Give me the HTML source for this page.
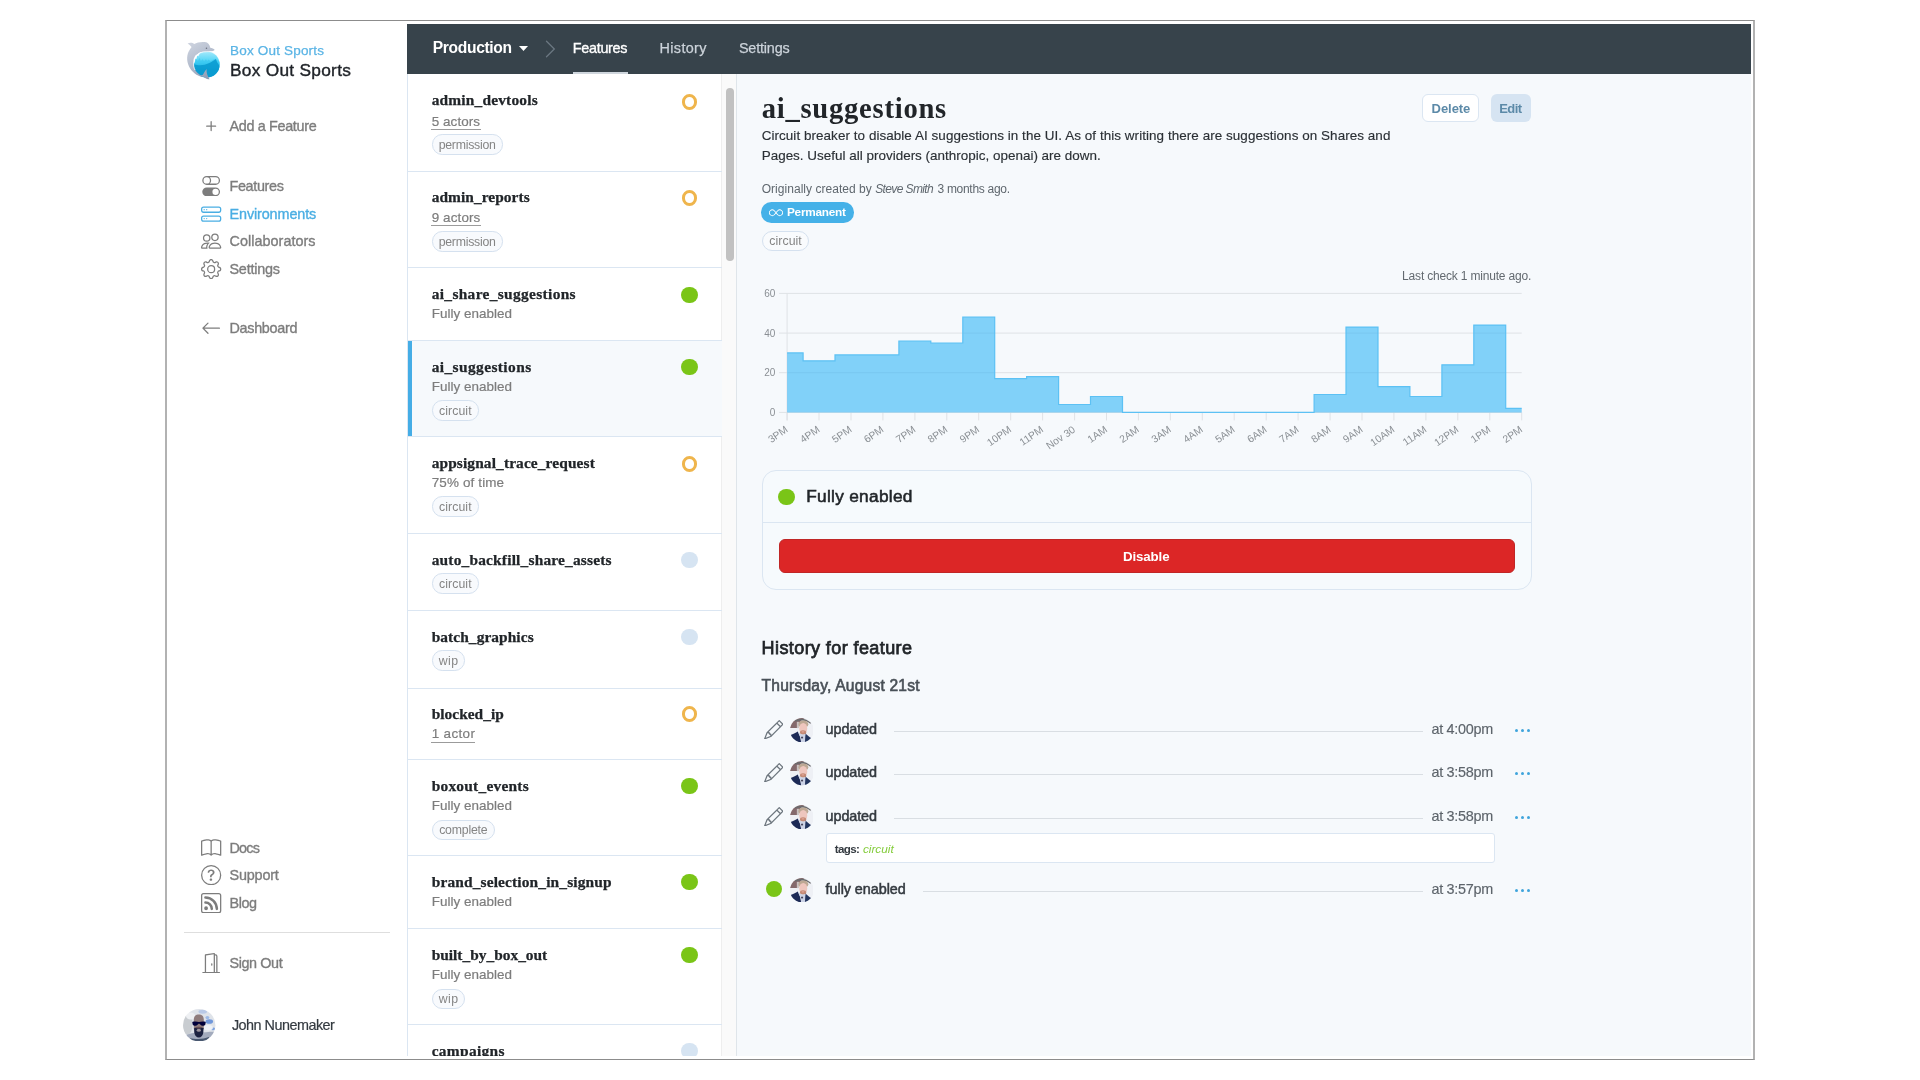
<!DOCTYPE html>
<html>
<head>
<meta charset="utf-8">
<title>Flipper Cloud - ai_suggestions</title>
<style>
*{box-sizing:border-box;margin:0;padding:0}
html,body{width:1920px;height:1080px;background:#fff;overflow:hidden}
body{font-family:"Liberation Sans",sans-serif;color:#212529;position:relative;font-size:14px}
.abs{position:absolute}
.t{position:absolute;white-space:pre;display:block}
#frame{position:absolute;left:165px;top:20px;width:1590px;height:1040px;border:1px solid #8c8c8c;border-left:2px solid #b2b2b2;border-right:2px solid #b2b2b2;z-index:50}
#clip{position:absolute;left:167px;top:21px;width:1583.500px;height:1035px;overflow:hidden;background:#fff}
#page{position:absolute;left:-167px;top:-21px;width:1920px;height:1080px;will-change:transform}
</style>
</head>
<body>
<div id="clip"><div id="page">
<!-- SIDEBAR -->
<svg class="abs" style="left:180px;top:36px" width="48" height="50" viewBox="0 0 1037 1080">
<defs>
<linearGradient id="lg1" x1="0" y1="0" x2="0" y2="1"><stop offset="0" stop-color="#a5e9fb"/><stop offset="0.42" stop-color="#48d3f6"/><stop offset="0.62" stop-color="#14a9dc"/><stop offset="1" stop-color="#0a94c9"/></linearGradient>
<linearGradient id="lg2" x1="0.2" y1="0" x2="0.7" y2="1"><stop offset="0" stop-color="#ccd2de"/><stop offset="0.5" stop-color="#b3bccd"/><stop offset="1" stop-color="#909cb4"/></linearGradient>
<clipPath id="lgc"><circle cx="575" cy="615" r="282"/></clipPath>
</defs>
<circle cx="575" cy="615" r="292" fill="#e9f9fe"/>
<circle cx="575" cy="615" r="282" fill="url(#lg1)"/>
<g clip-path="url(#lgc)">
<path d="M300 470 L335 560 L350 480 L385 545 L420 470 L450 540 L490 500 L520 545 L560 500 L590 540 L620 505 L660 545 L700 520 L760 490 L860 560 L860 700 L290 700Z" fill="#33c2ee" opacity=".55"/>
<path d="M285 600 C400 650 520 640 620 590 C690 555 740 520 775 495 L800 560 L850 640 L870 900 L280 900Z" fill="#0a9bd0" opacity=".9"/>
</g>
<path d="M165 160 C210 140 270 140 310 175 C360 140 450 120 540 130 C600 135 640 180 655 255 C690 265 730 275 748 295 C745 320 700 330 640 328 C600 335 560 330 530 335 C460 335 400 360 375 400 C330 450 300 520 295 590 C290 680 330 770 420 830 C450 850 470 850 490 845 C520 800 545 750 575 715 C570 790 585 860 640 935 C600 935 540 915 505 880 C420 885 300 820 220 700 C150 590 130 450 190 330 C210 290 230 260 250 235 C225 205 195 180 165 160 Z" fill="url(#lg2)"/>
<path d="M372 392 L432 372 L395 440 L372 425 L352 505 L332 480 L318 570 L300 585 L292 500 L330 420Z" fill="#fff" opacity=".92"/><path d="M375 400 C330 450 300 520 295 590 C290 640 300 690 325 735" fill="none" stroke="#fff" stroke-width="18" opacity=".9"/>
<path d="M380 395 C450 345 560 335 650 338 C700 338 735 330 748 310" fill="none" stroke="#fff" stroke-width="16" opacity=".8"/>
<circle cx="572" cy="266" r="17" fill="#6b7280"/>
</svg>
<span class="t" style="left:230.00px;top:40.57px;font-family:'Liberation Sans',sans-serif;font-size:13.5px;line-height:20px;color:#5ab4e5;letter-spacing:0.189px;-webkit-text-stroke:0.25px #5ab4e5;">Box Out Sports</span>
<span class="t" style="left:230.00px;top:58.26px;font-family:'Liberation Sans',sans-serif;font-size:17.3px;line-height:24px;color:#1f2328;letter-spacing:0.284px;-webkit-text-stroke:0.4px #1f2328;">Box Out Sports</span>
<svg class="abs" style="left:201.2px;top:115.6px;" width="20.3" height="20.3" viewBox="0 0 16 16" fill="#7d7d7d"><path d="M8 4a.5.5 0 0 1 .5.5v3h3a.5.5 0 0 1 0 1h-3v3a.5.5 0 0 1-1 0v-3h-3a.5.5 0 0 1 0-1h3v-3A.5.5 0 0 1 8 4z"/></svg>
<span class="t" style="left:229.50px;top:116.26px;font-family:'Liberation Sans',sans-serif;font-size:14.4px;line-height:20px;color:#7d7d7d;letter-spacing:-0.338px;-webkit-text-stroke:0.35px #7d7d7d;">Add a Feature</span>
<svg class="abs" style="left:201.4px;top:175.9px;" width="20.3" height="20.3" viewBox="0 0 16 16" fill="#7d7d7d"><path d="M4.5 9a3.5 3.5 0 1 0 0 7h7a3.5 3.5 0 1 0 0-7h-7zm7 6a2.5 2.5 0 1 1 0-5 2.5 2.5 0 0 1 0 5zm-7-14a2.5 2.5 0 1 0 0 5 2.5 2.5 0 0 0 0-5zm2.45 0A3.49 3.49 0 0 1 8 3.5 3.49 3.49 0 0 1 6.95 6h4.55a2.5 2.5 0 0 0 0-5H6.95zM4.5 0h7a3.5 3.5 0 1 1 0 7h-7a3.5 3.5 0 1 1 0-7z"/></svg>
<span class="t" style="left:229.50px;top:176.26px;font-family:'Liberation Sans',sans-serif;font-size:14.4px;line-height:20px;color:#7d7d7d;letter-spacing:-0.347px;-webkit-text-stroke:0.35px #7d7d7d;">Features</span>
<svg class="abs" style="left:201.4px;top:203.6px;" width="20.3" height="20.3" viewBox="0 0 16 16" fill="#4aaee3"><path d="M14 10a1 1 0 0 1 1 1v1a1 1 0 0 1-1 1H2a1 1 0 0 1-1-1v-1a1 1 0 0 1 1-1h12zM2 9a2 2 0 0 0-2 2v1a2 2 0 0 0 2 2h12a2 2 0 0 0 2-2v-1a2 2 0 0 0-2-2H2z"/><path d="M5 11.5a.5.5 0 1 1-1 0 .5.5 0 0 1 1 0zm-2 0a.5.5 0 1 1-1 0 .5.5 0 0 1 1 0zM14 3a1 1 0 0 1 1 1v1a1 1 0 0 1-1 1H2a1 1 0 0 1-1-1V4a1 1 0 0 1 1-1h12zM2 2a2 2 0 0 0-2 2v1a2 2 0 0 0 2 2h12a2 2 0 0 0 2-2V4a2 2 0 0 0-2-2H2z"/><path d="M5 4.5a.5.5 0 1 1-1 0 .5.5 0 0 1 1 0zm-2 0a.5.5 0 1 1-1 0 .5.5 0 0 1 1 0z"/></svg>
<span class="t" style="left:229.50px;top:204.26px;font-family:'Liberation Sans',sans-serif;font-size:14.4px;line-height:20px;color:#4aaee3;letter-spacing:-0.113px;-webkit-text-stroke:0.35px #4aaee3;">Environments</span>
<svg class="abs" style="left:201.4px;top:230.9px;" width="20.3" height="20.3" viewBox="0 0 16 16" fill="#7d7d7d"><path d="M15 14s1 0 1-1-1-4-5-4-5 3-5 4 1 1 1 1h8zm-7.978-1A.261.261 0 0 1 7 12.996c.001-.264.167-1.03.76-1.72C8.312 10.629 9.282 10 11 10c1.717 0 2.687.63 3.24 1.276.593.69.758 1.457.76 1.72l-.008.002a.274.274 0 0 1-.014.002H7.022zM11 7a2 2 0 1 0 0-4 2 2 0 0 0 0 4zm3-2a3 3 0 1 1-6 0 3 3 0 0 1 6 0zM6.936 9.28a5.88 5.88 0 0 0-1.23-.247A7.35 7.35 0 0 0 5 9c-4 0-5 3-5 4 0 .667.333 1 1 1h4.216A2.238 2.238 0 0 1 5 13c0-1.01.377-2.042 1.09-2.904.243-.294.526-.569.846-.816zM4.92 10A5.493 5.493 0 0 0 4 13H1c0-.26.164-1.03.76-1.724.545-.636 1.492-1.256 3.16-1.275zM1.5 5.5a3 3 0 1 1 6 0 3 3 0 0 1-6 0zm3-2a2 2 0 1 0 0 4 2 2 0 0 0 0-4z"/></svg>
<span class="t" style="left:229.50px;top:231.26px;font-family:'Liberation Sans',sans-serif;font-size:14.4px;line-height:20px;color:#7d7d7d;letter-spacing:0.038px;-webkit-text-stroke:0.35px #7d7d7d;">Collaborators</span>
<svg class="abs" style="left:201.4px;top:258.9px;" width="20.3" height="20.3" viewBox="0 0 16 16" fill="#7d7d7d"><path d="M8 4.754a3.246 3.246 0 1 0 0 6.492 3.246 3.246 0 0 0 0-6.492zM5.754 8a2.246 2.246 0 1 1 4.492 0 2.246 2.246 0 0 1-4.492 0z"/><path d="M9.796 1.343c-.527-1.79-3.065-1.79-3.592 0l-.094.319a.873.873 0 0 1-1.255.52l-.292-.16c-1.64-.892-3.433.902-2.54 2.541l.159.292a.873.873 0 0 1-.52 1.255l-.319.094c-1.79.527-1.79 3.065 0 3.592l.319.094a.873.873 0 0 1 .52 1.255l-.16.292c-.892 1.64.901 3.434 2.541 2.54l.292-.159a.873.873 0 0 1 1.255.52l.094.319c.527 1.79 3.065 1.79 3.592 0l.094-.319a.873.873 0 0 1 1.255-.52l.292.16c1.64.893 3.434-.902 2.54-2.541l-.159-.292a.873.873 0 0 1 .52-1.255l.319-.094c1.79-.527 1.79-3.065 0-3.592l-.319-.094a.873.873 0 0 1-.52-1.255l.16-.292c.893-1.64-.902-3.433-2.541-2.54l-.292.159a.873.873 0 0 1-1.255-.52l-.094-.319zm-2.633.283c.246-.835 1.428-.835 1.674 0l.094.319a1.873 1.873 0 0 0 2.693 1.115l.291-.16c.764-.415 1.6.42 1.184 1.185l-.159.292a1.873 1.873 0 0 0 1.116 2.692l.318.094c.835.246.835 1.428 0 1.674l-.319.094a1.873 1.873 0 0 0-1.115 2.693l.16.291c.415.764-.42 1.6-1.185 1.184l-.291-.159a1.873 1.873 0 0 0-2.693 1.116l-.094.318c-.246.835-1.428.835-1.674 0l-.094-.319a1.873 1.873 0 0 0-2.692-1.115l-.292.16c-.764.415-1.6-.42-1.184-1.185l.159-.291A1.873 1.873 0 0 0 1.945 8.93l-.319-.094c-.835-.246-.835-1.428 0-1.674l.319-.094A1.873 1.873 0 0 0 3.06 4.377l-.16-.292c-.415-.764.42-1.6 1.185-1.184l.292.159a1.873 1.873 0 0 0 2.692-1.115l.094-.319z"/></svg>
<span class="t" style="left:229.50px;top:259.26px;font-family:'Liberation Sans',sans-serif;font-size:14.4px;line-height:20px;color:#7d7d7d;letter-spacing:-0.233px;-webkit-text-stroke:0.35px #7d7d7d;">Settings</span>
<svg class="abs" style="left:201.4px;top:317.59999999999997px;" width="20.3" height="20.3" viewBox="0 0 16 16" fill="#7d7d7d"><path fill-rule="evenodd" d="M15 8a.5.5 0 0 0-.5-.5H2.707l3.147-3.146a.5.5 0 1 0-.708-.708l-4 4a.5.5 0 0 0 0 .708l4 4a.5.5 0 0 0 .708-.708L2.707 8.5H14.5A.5.5 0 0 0 15 8z"/></svg>
<span class="t" style="left:229.50px;top:318.26px;font-family:'Liberation Sans',sans-serif;font-size:14.4px;line-height:20px;color:#7d7d7d;letter-spacing:-0.306px;-webkit-text-stroke:0.35px #7d7d7d;">Dashboard</span>
<svg class="abs" style="left:201.4px;top:838.1px;" width="20.3" height="20.3" viewBox="0 0 16 16" fill="#7d7d7d"><path d="M1 2.828c.885-.37 2.154-.769 3.388-.893 1.33-.134 2.458.063 3.112.752v9.746c-.935-.53-2.12-.603-3.213-.493-1.18.12-2.37.461-3.287.811V2.828zm7.5-.141c.654-.689 1.782-.886 3.112-.752 1.234.124 2.503.523 3.388.893v9.923c-.918-.35-2.107-.692-3.287-.81-1.094-.111-2.278-.039-3.213.492V2.687zM8 1.783C7.015.936 5.587.81 4.287.94c-1.514.153-3.042.672-3.994 1.105A.5.5 0 0 0 0 2.5v11a.5.5 0 0 0 .707.455c.882-.4 2.303-.881 3.68-1.02 1.409-.142 2.59.087 3.223.877a.5.5 0 0 0 .78 0c.633-.79 1.814-1.019 3.222-.877 1.378.139 2.8.62 3.681 1.02A.5.5 0 0 0 16 13.5v-11a.5.5 0 0 0-.293-.455c-.952-.433-2.48-.952-3.994-1.105C10.413.809 8.985.936 8 1.783z"/></svg>
<span class="t" style="left:229.50px;top:838.26px;font-family:'Liberation Sans',sans-serif;font-size:14.4px;line-height:20px;color:#7d7d7d;letter-spacing:-0.803px;-webkit-text-stroke:0.35px #7d7d7d;">Docs</span>
<svg class="abs" style="left:201.4px;top:864.6px;" width="20.3" height="20.3" viewBox="0 0 16 16" fill="#7d7d7d"><path d="M8 15A7 7 0 1 1 8 1a7 7 0 0 1 0 14zm0 1A8 8 0 1 0 8 0a8 8 0 0 0 0 16z"/><path d="M5.255 5.786a.237.237 0 0 0 .241.247h.825c.138 0 .248-.113.266-.25.09-.656.54-1.134 1.342-1.134.686 0 1.314.343 1.314 1.168 0 .635-.374.927-.965 1.371-.673.489-1.206 1.06-1.168 1.987l.003.217a.25.25 0 0 0 .25.246h.811a.25.25 0 0 0 .25-.25v-.105c0-.718.273-.927 1.01-1.486.609-.463 1.244-.977 1.244-2.056 0-1.511-1.276-2.241-2.673-2.241-1.267 0-2.655.59-2.75 2.286zm1.557 5.763c0 .533.425.927 1.01.927.609 0 1.028-.394 1.028-.927 0-.552-.42-.94-1.029-.94-.584 0-1.009.388-1.009.94z"/></svg>
<span class="t" style="left:229.50px;top:865.26px;font-family:'Liberation Sans',sans-serif;font-size:14.4px;line-height:20px;color:#7d7d7d;letter-spacing:-0.173px;-webkit-text-stroke:0.35px #7d7d7d;">Support</span>
<svg class="abs" style="left:201.4px;top:892.6999999999999px;" width="20.3" height="20.3" viewBox="0 0 16 16" fill="#7d7d7d"><path d="M14 1a1 1 0 0 1 1 1v12a1 1 0 0 1-1 1H2a1 1 0 0 1-1-1V2a1 1 0 0 1 1-1h12zM2 0a2 2 0 0 0-2 2v12a2 2 0 0 0 2 2h12a2 2 0 0 0 2-2V2a2 2 0 0 0-2-2H2z"/><path d="M5.5 12a1.5 1.5 0 1 1-3 0 1.5 1.5 0 0 1 3 0zm-3-8.5a1 1 0 0 1 1-1c5.523 0 10 4.477 10 10a1 1 0 1 1-2 0 8 8 0 0 0-8-8 1 1 0 0 1-1-1zm0 4a1 1 0 0 1 1-1 6 6 0 0 1 6 6 1 1 0 1 1-2 0 4 4 0 0 0-4-4 1 1 0 0 1-1-1z"/></svg>
<span class="t" style="left:229.50px;top:893.26px;font-family:'Liberation Sans',sans-serif;font-size:14.4px;line-height:20px;color:#7d7d7d;letter-spacing:-0.407px;-webkit-text-stroke:0.35px #7d7d7d;">Blog</span>
<svg class="abs" style="left:201.4px;top:952.6999999999999px;" width="20.3" height="20.3" viewBox="0 0 16 16" fill="#7d7d7d"><path d="M8.5 10c-.276 0-.5-.448-.5-1s.224-1 .5-1 .5.448.5 1-.224 1-.5 1z"/><path d="M10.828.122A.5.5 0 0 1 11 .5V1h.5A1.5 1.5 0 0 1 13 2.5V15h1.5a.5.5 0 0 1 0 1h-13a.5.5 0 0 1 0-1H3V1.5a.5.5 0 0 1 .43-.495l7-1a.5.5 0 0 1 .398.117zM11.5 2H11v13h1V2.5a.5.5 0 0 0-.5-.5zM4 1.934V15h6V1.077l-6 .857z"/></svg>
<span class="t" style="left:229.50px;top:953.26px;font-family:'Liberation Sans',sans-serif;font-size:14.4px;line-height:20px;color:#7d7d7d;letter-spacing:-0.405px;-webkit-text-stroke:0.35px #7d7d7d;">Sign Out</span>
<div class="abs" style="left:184px;top:931.5px;width:206px;height:1px;background:#dedede"></div>
<svg class="abs" style="left:183.200px;top:1008.600px" width="32.400" height="32.400" viewBox="135 120 830 830">
<defs><clipPath id="uac"><circle cx="550" cy="535" r="415"/></clipPath>
<filter id="ubl" x="-10%" y="-10%" width="120%" height="120%"><feGaussianBlur stdDeviation="20"/></filter></defs>
<g clip-path="url(#uac)"><g filter="url(#ubl)">
<rect x="100" y="100" width="900" height="900" fill="#dfe3e9"/>
<ellipse cx="250" cy="520" rx="130" ry="260" fill="#c9cdd1"/>
<ellipse cx="330" cy="300" rx="120" ry="90" fill="#eef0f3"/>
<ellipse cx="640" cy="190" rx="110" ry="50" fill="#b9c9e6"/>
<ellipse cx="810" cy="440" rx="95" ry="60" fill="#6f97da"/>
<ellipse cx="760" cy="340" rx="50" ry="40" fill="#9db9e6"/>
<ellipse cx="900" cy="630" rx="60" ry="35" fill="#7fa3de"/>
<ellipse cx="780" cy="600" rx="120" ry="70" fill="#eef1f6"/>
<path d="M150 950 L180 800 C300 740 420 720 540 720 C660 720 800 700 930 700 L960 950Z" fill="#a3abbd"/>
<path d="M250 950 L300 860 C450 900 650 900 800 840 L820 950Z" fill="#4a5870"/>
<path d="M412 400 C412 300 460 258 540 258 C620 258 668 300 668 400 L668 640 L412 640Z" fill="#8f7b7c"/>
<path d="M418 620 C418 585 662 585 662 620 L655 730 C635 815 600 850 540 850 C480 850 445 815 425 730Z" fill="#1b2040"/>
<ellipse cx="540" cy="665" rx="55" ry="40" fill="#9c949c"/>
<ellipse cx="540" cy="600" rx="70" ry="22" fill="#6a4f55"/>
<path d="M372 452 C420 432 500 436 545 455 C590 436 670 432 718 452 L708 515 C685 560 612 562 575 515 L545 490 L515 515 C478 562 405 560 382 515Z" fill="#05053a"/>
</g></g></svg>
<span class="t" style="left:231.90px;top:1015.26px;font-family:'Liberation Sans',sans-serif;font-size:14.4px;line-height:20px;color:#343a40;letter-spacing:-0.505px;-webkit-text-stroke:0.2px #343a40;">John Nunemaker</span>
<!-- HEADER -->
<div class="abs" style="left:407px;top:24px;width:1344px;height:50px;background:#37434b"></div>
<span class="t" style="left:432.80px;top:37.84px;font-family:'Liberation Sans',sans-serif;font-size:15.6px;line-height:20px;color:#ffffff;font-weight:bold;letter-spacing:-0.336px;">Production</span>
<svg class="abs" style="left:518.5px;top:45.5px" width="9" height="5" viewBox="0 0 9 5"><path d="M0 0H9L4.500 5Z" fill="#fff"/></svg>
<svg class="abs" style="left:545px;top:39px" width="11" height="20" viewBox="0 0 11 20"><path d="M1.500 2.300L9.300 10L1.500 17.700" fill="none" stroke="#6b7882" stroke-width="1.300" stroke-linecap="round"/></svg>
<span class="t" style="left:572.80px;top:38.26px;font-family:'Liberation Sans',sans-serif;font-size:14.4px;line-height:20px;color:#ffffff;letter-spacing:-0.304px;-webkit-text-stroke:0.35px #ffffff;">Features</span>
<span class="t" style="left:659.50px;top:38.26px;font-family:'Liberation Sans',sans-serif;font-size:14.4px;line-height:20px;color:#ccd3da;letter-spacing:0.366px;-webkit-text-stroke:0.25px #ccd3da;">History</span>
<span class="t" style="left:738.90px;top:38.26px;font-family:'Liberation Sans',sans-serif;font-size:14.4px;line-height:20px;color:#ccd3da;letter-spacing:-0.176px;-webkit-text-stroke:0.25px #ccd3da;">Settings</span>
<div class="abs" style="left:572.8px;top:71.5px;width:54.8px;height:2.5px;background:#cfd6dd"></div>
<!-- LIST -->
<div class="abs" style="left:407px;top:74px;width:315px;height:990px;background:#fff;border-left:1px solid #dbe6f2"></div>
<div class="abs" style="left:721px;top:74px;width:16px;height:990px;background:#fafafa;border-left:1px solid #eeeeee"></div>
<div class="abs" style="left:725.5px;top:88px;width:8px;height:173px;background:#c1c1c1;border-radius:4px"></div>
<div class="abs" style="left:736px;top:74px;width:1px;height:990px;background:#dfe5ea"></div>
<span class="t" style="left:431.70px;top:90.05px;font-family:'Liberation Serif',serif;font-size:15.4px;line-height:20px;color:#212529;font-weight:bold;letter-spacing:0.189px;-webkit-text-stroke:0.25px #212529;">admin_devtools</span>
<span class="t" style="left:431.70px;top:111.59px;font-family:'Liberation Sans',sans-serif;font-size:13.44px;line-height:20px;color:#7d7d7d;letter-spacing:0.085px;-webkit-text-stroke:0.2px #7d7d7d;">5 actors</span>
<div class="abs" style="left:431.2px;top:129px;width:49.4px;height:1px;background:#9b9b9b"></div>
<div class="abs" style="left:431.5px;top:134.2px;width:71.6px;height:20.4px;border:1px solid #d5e1ef;border-radius:10.2px;background:#f8fafd"></div>
<span class="t" style="left:438.65px;top:136.99px;font-family:'Liberation Sans',sans-serif;font-size:12.3px;line-height:16px;color:#858585;letter-spacing:-0.241px;">permission</span>
<div class="abs" style="left:681.6px;top:94.1px;width:15.8px;height:15.8px;border-radius:50%;border:3px solid #efb54c;background:#fff"></div>
<div class="abs" style="left:408px;top:171px;width:314px;height:1px;background:#dbe6f2"></div>
<span class="t" style="left:431.70px;top:187.05px;font-family:'Liberation Serif',serif;font-size:15.4px;line-height:20px;color:#212529;font-weight:bold;letter-spacing:0.062px;-webkit-text-stroke:0.25px #212529;">admin_reports</span>
<span class="t" style="left:431.70px;top:207.59px;font-family:'Liberation Sans',sans-serif;font-size:13.44px;line-height:20px;color:#7d7d7d;letter-spacing:0.113px;-webkit-text-stroke:0.2px #7d7d7d;">9 actors</span>
<div class="abs" style="left:431.2px;top:225px;width:49.6px;height:1px;background:#9b9b9b"></div>
<div class="abs" style="left:431.5px;top:231.3px;width:71.6px;height:20.4px;border:1px solid #d5e1ef;border-radius:10.2px;background:#f8fafd"></div>
<span class="t" style="left:438.65px;top:233.99px;font-family:'Liberation Sans',sans-serif;font-size:12.3px;line-height:16px;color:#858585;letter-spacing:-0.241px;">permission</span>
<div class="abs" style="left:681.6px;top:190.1px;width:15.8px;height:15.8px;border-radius:50%;border:3px solid #efb54c;background:#fff"></div>
<div class="abs" style="left:408px;top:267px;width:314px;height:1px;background:#dbe6f2"></div>
<span class="t" style="left:431.70px;top:284.05px;font-family:'Liberation Serif',serif;font-size:15.4px;line-height:20px;color:#212529;font-weight:bold;letter-spacing:0.343px;-webkit-text-stroke:0.25px #212529;">ai_share_suggestions</span>
<span class="t" style="left:431.70px;top:303.59px;font-family:'Liberation Sans',sans-serif;font-size:13.44px;line-height:20px;color:#7d7d7d;letter-spacing:0.030px;-webkit-text-stroke:0.2px #7d7d7d;">Fully enabled</span>
<div class="abs" style="left:681.4px;top:286.7px;width:16.2px;height:16.2px;border-radius:50%;background:#7ac517"></div>
<div class="abs" style="left:408px;top:341px;width:314px;height:95px;background:#f6f9fc"></div>
<div class="abs" style="left:407.5px;top:340.5px;width:4px;height:96px;background:#45ade6"></div>
<div class="abs" style="left:408px;top:340px;width:314px;height:1px;background:#dbe6f2"></div>
<span class="t" style="left:431.70px;top:357.05px;font-family:'Liberation Serif',serif;font-size:15.4px;line-height:20px;color:#212529;font-weight:bold;letter-spacing:0.413px;-webkit-text-stroke:0.25px #212529;">ai_suggestions</span>
<span class="t" style="left:431.70px;top:376.59px;font-family:'Liberation Sans',sans-serif;font-size:13.44px;line-height:20px;color:#7d7d7d;letter-spacing:0.030px;-webkit-text-stroke:0.2px #7d7d7d;">Fully enabled</span>
<div class="abs" style="left:431.5px;top:400.4px;width:47.7px;height:20.4px;border:1px solid #d5e1ef;border-radius:10.2px;background:#f8fafd"></div>
<span class="t" style="left:439.10px;top:402.99px;font-family:'Liberation Sans',sans-serif;font-size:12.3px;line-height:16px;color:#858585;letter-spacing:0.063px;">circuit</span>
<div class="abs" style="left:681.4px;top:358.79999999999995px;width:16.2px;height:16.2px;border-radius:50%;background:#7ac517"></div>
<div class="abs" style="left:408px;top:436px;width:314px;height:1px;background:#dbe6f2"></div>
<span class="t" style="left:431.70px;top:453.05px;font-family:'Liberation Serif',serif;font-size:15.4px;line-height:20px;color:#212529;font-weight:bold;letter-spacing:0.120px;-webkit-text-stroke:0.25px #212529;">appsignal_trace_request</span>
<span class="t" style="left:431.70px;top:472.59px;font-family:'Liberation Sans',sans-serif;font-size:13.44px;line-height:20px;color:#7d7d7d;letter-spacing:0.143px;-webkit-text-stroke:0.2px #7d7d7d;">75% of time</span>
<div class="abs" style="left:431.5px;top:496.4px;width:47.7px;height:20.4px;border:1px solid #d5e1ef;border-radius:10.2px;background:#f8fafd"></div>
<span class="t" style="left:439.10px;top:498.99px;font-family:'Liberation Sans',sans-serif;font-size:12.3px;line-height:16px;color:#858585;letter-spacing:0.063px;">circuit</span>
<div class="abs" style="left:681.6px;top:456.1px;width:15.8px;height:15.8px;border-radius:50%;border:3px solid #efb54c;background:#fff"></div>
<div class="abs" style="left:408px;top:533px;width:314px;height:1px;background:#dbe6f2"></div>
<span class="t" style="left:431.70px;top:550.05px;font-family:'Liberation Serif',serif;font-size:15.4px;line-height:20px;color:#212529;font-weight:bold;letter-spacing:0.195px;-webkit-text-stroke:0.25px #212529;">auto_backfill_share_assets</span>
<div class="abs" style="left:431.5px;top:573.1999999999999px;width:47.7px;height:20.4px;border:1px solid #d5e1ef;border-radius:10.2px;background:#f8fafd"></div>
<span class="t" style="left:439.10px;top:575.99px;font-family:'Liberation Sans',sans-serif;font-size:12.3px;line-height:16px;color:#858585;letter-spacing:0.063px;">circuit</span>
<div class="abs" style="left:681.4px;top:551.9px;width:16.2px;height:16.2px;border-radius:50%;background:#d6e4f2"></div>
<div class="abs" style="left:408px;top:610px;width:314px;height:1px;background:#dbe6f2"></div>
<span class="t" style="left:431.70px;top:627.05px;font-family:'Liberation Serif',serif;font-size:15.4px;line-height:20px;color:#212529;font-weight:bold;letter-spacing:0.080px;-webkit-text-stroke:0.25px #212529;">batch_graphics</span>
<div class="abs" style="left:431.5px;top:650.3px;width:33.7px;height:20.4px;border:1px solid #d5e1ef;border-radius:10.2px;background:#f8fafd"></div>
<span class="t" style="left:438.70px;top:652.99px;font-family:'Liberation Sans',sans-serif;font-size:12.3px;line-height:16px;color:#858585;letter-spacing:0.422px;">wip</span>
<div class="abs" style="left:681.4px;top:628.9px;width:16.2px;height:16.2px;border-radius:50%;background:#d6e4f2"></div>
<div class="abs" style="left:408px;top:688px;width:314px;height:1px;background:#dbe6f2"></div>
<span class="t" style="left:431.70px;top:704.05px;font-family:'Liberation Serif',serif;font-size:15.4px;line-height:20px;color:#212529;font-weight:bold;letter-spacing:0.024px;-webkit-text-stroke:0.25px #212529;">blocked_ip</span>
<span class="t" style="left:431.70px;top:723.59px;font-family:'Liberation Sans',sans-serif;font-size:13.44px;line-height:20px;color:#7d7d7d;letter-spacing:0.352px;-webkit-text-stroke:0.2px #7d7d7d;">1 actor</span>
<div class="abs" style="left:431.2px;top:742px;width:44.2px;height:1px;background:#9b9b9b"></div>
<div class="abs" style="left:681.6px;top:705.9px;width:15.8px;height:15.8px;border-radius:50%;border:3px solid #efb54c;background:#fff"></div>
<div class="abs" style="left:408px;top:759px;width:314px;height:1px;background:#dbe6f2"></div>
<span class="t" style="left:431.70px;top:776.05px;font-family:'Liberation Serif',serif;font-size:15.4px;line-height:20px;color:#212529;font-weight:bold;letter-spacing:0.240px;-webkit-text-stroke:0.25px #212529;">boxout_events</span>
<span class="t" style="left:431.70px;top:795.59px;font-family:'Liberation Sans',sans-serif;font-size:13.44px;line-height:20px;color:#7d7d7d;letter-spacing:0.030px;-webkit-text-stroke:0.2px #7d7d7d;">Fully enabled</span>
<div class="abs" style="left:431.5px;top:819.6px;width:63.8px;height:20.4px;border:1px solid #d5e1ef;border-radius:10.2px;background:#f8fafd"></div>
<span class="t" style="left:439.15px;top:821.99px;font-family:'Liberation Sans',sans-serif;font-size:12.3px;line-height:16px;color:#858585;letter-spacing:-0.201px;">complete</span>
<div class="abs" style="left:681.4px;top:777.9px;width:16.2px;height:16.2px;border-radius:50%;background:#7ac517"></div>
<div class="abs" style="left:408px;top:855px;width:314px;height:1px;background:#dbe6f2"></div>
<span class="t" style="left:431.70px;top:872.05px;font-family:'Liberation Serif',serif;font-size:15.4px;line-height:20px;color:#212529;font-weight:bold;letter-spacing:0.155px;-webkit-text-stroke:0.25px #212529;">brand_selection_in_signup</span>
<span class="t" style="left:431.70px;top:891.59px;font-family:'Liberation Sans',sans-serif;font-size:13.44px;line-height:20px;color:#7d7d7d;letter-spacing:0.030px;-webkit-text-stroke:0.2px #7d7d7d;">Fully enabled</span>
<div class="abs" style="left:681.4px;top:873.9px;width:16.2px;height:16.2px;border-radius:50%;background:#7ac517"></div>
<div class="abs" style="left:408px;top:928px;width:314px;height:1px;background:#dbe6f2"></div>
<span class="t" style="left:431.70px;top:945.05px;font-family:'Liberation Serif',serif;font-size:15.4px;line-height:20px;color:#212529;font-weight:bold;letter-spacing:0.004px;-webkit-text-stroke:0.25px #212529;">built_by_box_out</span>
<span class="t" style="left:431.70px;top:964.59px;font-family:'Liberation Sans',sans-serif;font-size:13.44px;line-height:20px;color:#7d7d7d;letter-spacing:0.030px;-webkit-text-stroke:0.2px #7d7d7d;">Fully enabled</span>
<div class="abs" style="left:431.5px;top:988.6px;width:33.7px;height:20.4px;border:1px solid #d5e1ef;border-radius:10.2px;background:#f8fafd"></div>
<span class="t" style="left:438.70px;top:990.99px;font-family:'Liberation Sans',sans-serif;font-size:12.3px;line-height:16px;color:#858585;letter-spacing:0.422px;">wip</span>
<div class="abs" style="left:681.4px;top:946.9px;width:16.2px;height:16.2px;border-radius:50%;background:#7ac517"></div>
<div class="abs" style="left:408px;top:1024px;width:314px;height:1px;background:#dbe6f2"></div>
<span class="t" style="left:431.70px;top:1041.05px;font-family:'Liberation Serif',serif;font-size:15.4px;line-height:20px;color:#212529;font-weight:bold;letter-spacing:0.329px;-webkit-text-stroke:0.25px #212529;">campaigns</span>
<div class="abs" style="left:681.4px;top:1043.1000000000001px;width:16.2px;height:16.2px;border-radius:50%;background:#d6e4f2"></div>
<!-- MAIN -->
<div class="abs" style="left:737px;top:74px;width:1014px;height:990px;background:#f6f9fc"></div>
<span class="t" style="left:761.70px;top:91.60px;font-family:'Liberation Serif',serif;font-size:28.6px;line-height:34px;color:#212529;font-weight:bold;letter-spacing:0.753px;">ai_suggestions</span>
<span class="t" style="left:761.70px;top:125.59px;font-family:'Liberation Sans',sans-serif;font-size:13.44px;line-height:20px;color:#2b3035;letter-spacing:0.061px;-webkit-text-stroke:0.15px #2b3035;">Circuit breaker to disable AI suggestions in the UI. As of this writing there are suggestions on Shares and</span>
<span class="t" style="left:761.70px;top:145.59px;font-family:'Liberation Sans',sans-serif;font-size:13.44px;line-height:20px;color:#2b3035;letter-spacing:0.012px;-webkit-text-stroke:0.15px #2b3035;">Pages. Useful all providers (anthropic, openai) are down.</span>
<span class="t" style="left:761.70px;top:179.09px;font-family:'Liberation Sans',sans-serif;font-size:12px;line-height:20px;color:#5f676e;letter-spacing:0.037px;">Originally created by </span>
<span class="t" style="left:875.20px;top:179.09px;font-family:'Liberation Sans',sans-serif;font-size:12px;line-height:20px;color:#5f676e;font-style:italic;letter-spacing:-0.619px;">Steve Smith</span>
<span class="t" style="left:937.50px;top:179.09px;font-family:'Liberation Sans',sans-serif;font-size:12px;line-height:20px;color:#5f676e;letter-spacing:-0.296px;">3 months ago.</span>
<div class="abs" style="left:761.3px;top:202.2px;width:93.2px;height:20.5px;background:#45b1e8;border-radius:10.3px"></div>
<svg class="abs" style="left:768.6px;top:205.6px;" width="14" height="14" viewBox="0 0 16 16" fill="#fff"><path d="M5.68 5.792 7.345 7.75 5.681 9.708a2.75 2.75 0 1 1 0-3.916ZM8 6.978 6.416 5.113l-.014-.015a3.75 3.75 0 1 0 0 5.304l.014-.015L8 8.522l1.584 1.865.014.015a3.75 3.75 0 1 0 0-5.304l-.014.015L8 6.978Zm.656.772 1.663-1.958a2.75 2.75 0 1 1 0 3.916L8.656 7.75Z"/></svg>
<span class="t" style="left:787.00px;top:204.16px;font-family:'Liberation Sans',sans-serif;font-size:11.8px;line-height:16px;color:#fff;font-weight:bold;letter-spacing:-0.249px;">Permanent</span>
<div class="abs" style="left:761.7px;top:231px;width:47.7px;height:20.4px;border:1px solid #d5e1ef;border-radius:10.2px;background:#f9fbfd"></div>
<span class="t" style="left:769.30px;top:232.99px;font-family:'Liberation Sans',sans-serif;font-size:12.3px;line-height:16px;color:#858585;letter-spacing:0.063px;">circuit</span>
<div class="abs" style="left:1422.4px;top:94.2px;width:56.8px;height:27.6px;background:#fff;border:1px solid #dbe6f2;border-radius:6px"></div>
<span class="t" style="left:1431.60px;top:98.75px;font-family:'Liberation Sans',sans-serif;font-size:13px;line-height:20px;color:#5c8aa8;font-weight:bold;letter-spacing:-0.064px;">Delete</span>
<div class="abs" style="left:1490.7px;top:94.2px;width:40.5px;height:27.6px;background:#d6e4f2;border-radius:6px"></div>
<span class="t" style="left:1499.20px;top:98.75px;font-family:'Liberation Sans',sans-serif;font-size:13px;line-height:20px;color:#5c8aa8;font-weight:bold;letter-spacing:-0.518px;">Edit</span>
<span class="t" style="left:1402.10px;top:266.09px;font-family:'Liberation Sans',sans-serif;font-size:12px;line-height:20px;color:#636a70;letter-spacing:-0.183px;">Last check 1 minute ago.</span>
<svg class="abs" style="left:750px;top:280px" width="790" height="180" viewBox="750 280 790 180"><line x1="779.1" y1="412.4" x2="1521.7" y2="412.4" stroke="#dfe2e6" stroke-width="1"/><text x="775.3" y="416.1" text-anchor="end" font-family="Liberation Sans, sans-serif" font-size="10" fill="#8a8f94">0</text><line x1="779.1" y1="372.7" x2="1521.7" y2="372.7" stroke="#dfe2e6" stroke-width="1"/><text x="775.3" y="376.4" text-anchor="end" font-family="Liberation Sans, sans-serif" font-size="10" fill="#8a8f94">20</text><line x1="779.1" y1="333.1" x2="1521.7" y2="333.1" stroke="#dfe2e6" stroke-width="1"/><text x="775.3" y="336.8" text-anchor="end" font-family="Liberation Sans, sans-serif" font-size="10" fill="#8a8f94">40</text><line x1="779.1" y1="293.4" x2="1521.7" y2="293.4" stroke="#dfe2e6" stroke-width="1"/><text x="775.3" y="297.1" text-anchor="end" font-family="Liberation Sans, sans-serif" font-size="10" fill="#8a8f94">60</text><line x1="787.1" y1="293.4" x2="787.1" y2="420.4" stroke="#dfe2e6" stroke-width="1"/><line x1="787.1" y1="412.4" x2="787.1" y2="420.4" stroke="#dfe2e6" stroke-width="1"/><line x1="819.0" y1="412.4" x2="819.0" y2="420.4" stroke="#dfe2e6" stroke-width="1"/><line x1="851.0" y1="412.4" x2="851.0" y2="420.4" stroke="#dfe2e6" stroke-width="1"/><line x1="882.9" y1="412.4" x2="882.9" y2="420.4" stroke="#dfe2e6" stroke-width="1"/><line x1="914.9" y1="412.4" x2="914.9" y2="420.4" stroke="#dfe2e6" stroke-width="1"/><line x1="946.8" y1="412.4" x2="946.8" y2="420.4" stroke="#dfe2e6" stroke-width="1"/><line x1="978.7" y1="412.4" x2="978.7" y2="420.4" stroke="#dfe2e6" stroke-width="1"/><line x1="1010.7" y1="412.4" x2="1010.7" y2="420.4" stroke="#dfe2e6" stroke-width="1"/><line x1="1042.6" y1="412.4" x2="1042.6" y2="420.4" stroke="#dfe2e6" stroke-width="1"/><line x1="1074.6" y1="412.4" x2="1074.6" y2="420.4" stroke="#dfe2e6" stroke-width="1"/><line x1="1106.5" y1="412.4" x2="1106.5" y2="420.4" stroke="#dfe2e6" stroke-width="1"/><line x1="1138.4" y1="412.4" x2="1138.4" y2="420.4" stroke="#dfe2e6" stroke-width="1"/><line x1="1170.4" y1="412.4" x2="1170.4" y2="420.4" stroke="#dfe2e6" stroke-width="1"/><line x1="1202.3" y1="412.4" x2="1202.3" y2="420.4" stroke="#dfe2e6" stroke-width="1"/><line x1="1234.2" y1="412.4" x2="1234.2" y2="420.4" stroke="#dfe2e6" stroke-width="1"/><line x1="1266.2" y1="412.4" x2="1266.2" y2="420.4" stroke="#dfe2e6" stroke-width="1"/><line x1="1298.1" y1="412.4" x2="1298.1" y2="420.4" stroke="#dfe2e6" stroke-width="1"/><line x1="1330.1" y1="412.4" x2="1330.1" y2="420.4" stroke="#dfe2e6" stroke-width="1"/><line x1="1362.0" y1="412.4" x2="1362.0" y2="420.4" stroke="#dfe2e6" stroke-width="1"/><line x1="1393.9" y1="412.4" x2="1393.9" y2="420.4" stroke="#dfe2e6" stroke-width="1"/><line x1="1425.9" y1="412.4" x2="1425.9" y2="420.4" stroke="#dfe2e6" stroke-width="1"/><line x1="1457.8" y1="412.4" x2="1457.8" y2="420.4" stroke="#dfe2e6" stroke-width="1"/><line x1="1489.8" y1="412.4" x2="1489.8" y2="420.4" stroke="#dfe2e6" stroke-width="1"/><line x1="1521.7" y1="412.4" x2="1521.7" y2="420.4" stroke="#dfe2e6" stroke-width="1"/><path d="M787.1 352.9 L803.1 352.9 L803.1 360.8 L835.0 360.8 L835.0 354.9 L866.9 354.9 L866.9 354.9 L898.9 354.9 L898.9 341.0 L930.8 341.0 L930.8 343.0 L962.8 343.0 L962.8 317.2 L994.7 317.2 L994.7 378.7 L1026.6 378.7 L1026.6 376.7 L1058.6 376.7 L1058.6 404.5 L1090.5 404.5 L1090.5 396.5 L1122.5 396.5 L1122.5 412.4 L1154.4 412.4 L1154.4 412.4 L1186.3 412.4 L1186.3 412.4 L1218.3 412.4 L1218.3 412.4 L1250.2 412.4 L1250.2 412.4 L1282.2 412.4 L1282.2 412.4 L1314.1 412.4 L1314.1 394.5 L1346.0 394.5 L1346.0 327.1 L1378.0 327.1 L1378.0 386.6 L1409.9 386.6 L1409.9 396.5 L1441.9 396.5 L1441.9 364.8 L1473.8 364.8 L1473.8 325.1 L1505.7 325.1 L1505.7 408.4 L1521.7 408.4 L1521.7 412.4 L787.1 412.4Z" fill="rgb(51,182,247)" fill-opacity="0.6"/><path d="M787.1 352.9 L803.1 352.9 L803.1 360.8 L835.0 360.8 L835.0 354.9 L866.9 354.9 L866.9 354.9 L898.9 354.9 L898.9 341.0 L930.8 341.0 L930.8 343.0 L962.8 343.0 L962.8 317.2 L994.7 317.2 L994.7 378.7 L1026.6 378.7 L1026.6 376.7 L1058.6 376.7 L1058.6 404.5 L1090.5 404.5 L1090.5 396.5 L1122.5 396.5 L1122.5 412.4 L1154.4 412.4 L1154.4 412.4 L1186.3 412.4 L1186.3 412.4 L1218.3 412.4 L1218.3 412.4 L1250.2 412.4 L1250.2 412.4 L1282.2 412.4 L1282.2 412.4 L1314.1 412.4 L1314.1 394.5 L1346.0 394.5 L1346.0 327.1 L1378.0 327.1 L1378.0 386.6 L1409.9 386.6 L1409.9 396.5 L1441.9 396.5 L1441.9 364.8 L1473.8 364.8 L1473.8 325.1 L1505.7 325.1 L1505.7 408.4 L1521.7 408.4" fill="none" stroke="#5cc1f4" stroke-width="1.200"/><text transform="translate(788.6,431.2) rotate(-34.500)" text-anchor="end" font-family="Liberation Sans, sans-serif" font-size="10.300" fill="#8a8f94">3PM</text><text transform="translate(820.5,431.2) rotate(-34.500)" text-anchor="end" font-family="Liberation Sans, sans-serif" font-size="10.300" fill="#8a8f94">4PM</text><text transform="translate(852.5,431.2) rotate(-34.500)" text-anchor="end" font-family="Liberation Sans, sans-serif" font-size="10.300" fill="#8a8f94">5PM</text><text transform="translate(884.4,431.2) rotate(-34.500)" text-anchor="end" font-family="Liberation Sans, sans-serif" font-size="10.300" fill="#8a8f94">6PM</text><text transform="translate(916.4,431.2) rotate(-34.500)" text-anchor="end" font-family="Liberation Sans, sans-serif" font-size="10.300" fill="#8a8f94">7PM</text><text transform="translate(948.3,431.2) rotate(-34.500)" text-anchor="end" font-family="Liberation Sans, sans-serif" font-size="10.300" fill="#8a8f94">8PM</text><text transform="translate(980.2,431.2) rotate(-34.500)" text-anchor="end" font-family="Liberation Sans, sans-serif" font-size="10.300" fill="#8a8f94">9PM</text><text transform="translate(1012.2,431.2) rotate(-34.500)" text-anchor="end" font-family="Liberation Sans, sans-serif" font-size="10.300" fill="#8a8f94">10PM</text><text transform="translate(1044.1,431.2) rotate(-34.500)" text-anchor="end" font-family="Liberation Sans, sans-serif" font-size="10.300" fill="#8a8f94">11PM</text><text transform="translate(1076.1,431.2) rotate(-34.500)" text-anchor="end" font-family="Liberation Sans, sans-serif" font-size="10.300" fill="#8a8f94">Nov 30</text><text transform="translate(1108.0,431.2) rotate(-34.500)" text-anchor="end" font-family="Liberation Sans, sans-serif" font-size="10.300" fill="#8a8f94">1AM</text><text transform="translate(1139.9,431.2) rotate(-34.500)" text-anchor="end" font-family="Liberation Sans, sans-serif" font-size="10.300" fill="#8a8f94">2AM</text><text transform="translate(1171.9,431.2) rotate(-34.500)" text-anchor="end" font-family="Liberation Sans, sans-serif" font-size="10.300" fill="#8a8f94">3AM</text><text transform="translate(1203.8,431.2) rotate(-34.500)" text-anchor="end" font-family="Liberation Sans, sans-serif" font-size="10.300" fill="#8a8f94">4AM</text><text transform="translate(1235.7,431.2) rotate(-34.500)" text-anchor="end" font-family="Liberation Sans, sans-serif" font-size="10.300" fill="#8a8f94">5AM</text><text transform="translate(1267.7,431.2) rotate(-34.500)" text-anchor="end" font-family="Liberation Sans, sans-serif" font-size="10.300" fill="#8a8f94">6AM</text><text transform="translate(1299.6,431.2) rotate(-34.500)" text-anchor="end" font-family="Liberation Sans, sans-serif" font-size="10.300" fill="#8a8f94">7AM</text><text transform="translate(1331.6,431.2) rotate(-34.500)" text-anchor="end" font-family="Liberation Sans, sans-serif" font-size="10.300" fill="#8a8f94">8AM</text><text transform="translate(1363.5,431.2) rotate(-34.500)" text-anchor="end" font-family="Liberation Sans, sans-serif" font-size="10.300" fill="#8a8f94">9AM</text><text transform="translate(1395.4,431.2) rotate(-34.500)" text-anchor="end" font-family="Liberation Sans, sans-serif" font-size="10.300" fill="#8a8f94">10AM</text><text transform="translate(1427.4,431.2) rotate(-34.500)" text-anchor="end" font-family="Liberation Sans, sans-serif" font-size="10.300" fill="#8a8f94">11AM</text><text transform="translate(1459.3,431.2) rotate(-34.500)" text-anchor="end" font-family="Liberation Sans, sans-serif" font-size="10.300" fill="#8a8f94">12PM</text><text transform="translate(1491.3,431.2) rotate(-34.500)" text-anchor="end" font-family="Liberation Sans, sans-serif" font-size="10.300" fill="#8a8f94">1PM</text><text transform="translate(1523.2,431.2) rotate(-34.500)" text-anchor="end" font-family="Liberation Sans, sans-serif" font-size="10.300" fill="#8a8f94">2PM</text></svg>
<div class="abs" style="left:761.6px;top:470px;width:770px;height:120px;border:1px solid #dbe6f2;border-radius:14px;background:#f6fafd"></div>
<div class="abs" style="left:762px;top:522.2px;width:769px;height:1px;background:#dbe6f2"></div>
<div class="abs" style="left:778.2px;top:488.5px;width:16.4px;height:16.4px;border-radius:50%;background:#7ac517"></div>
<span class="t" style="left:806.25px;top:484.26px;font-family:'Liberation Sans',sans-serif;font-size:17.3px;line-height:24px;color:#212529;letter-spacing:0.279px;-webkit-text-stroke:0.55px #212529;">Fully enabled</span>
<div class="abs" style="left:778.5px;top:539px;width:736.2px;height:33.6px;background:#dc2626;border:1px solid #c02626;border-radius:6px"></div>
<span class="t" style="left:1123.05px;top:546.64px;font-family:'Liberation Sans',sans-serif;font-size:13.3px;line-height:20px;color:#fff;font-weight:bold;letter-spacing:-0.135px;">Disable</span>
<span class="t" style="left:761.60px;top:636.01px;font-family:'Liberation Sans',sans-serif;font-size:18px;line-height:24px;color:#212529;letter-spacing:0.408px;-webkit-text-stroke:0.75px #212529;">History for feature</span>
<span class="t" style="left:761.60px;top:674.84px;font-family:'Liberation Sans',sans-serif;font-size:15.6px;line-height:22px;color:#495057;letter-spacing:0.197px;-webkit-text-stroke:0.6px #495057;">Thursday, August 21st</span>
<svg class="abs" style="left:763.5px;top:719.7px;" width="19.5" height="19.5" viewBox="0 0 16 16" fill="#6c757d"><path d="M12.146.146a.5.5 0 0 1 .708 0l3 3a.5.5 0 0 1 0 .708l-10 10a.5.5 0 0 1-.168.11l-5 2a.5.5 0 0 1-.65-.65l2-5a.5.5 0 0 1 .11-.168l10-10zM11.207 2.5 13.5 4.793 14.793 3.5 12.5 1.207 11.207 2.5zm1.586 3L10.5 3.207 4 9.707V10h.5a.5.5 0 0 1 .5.5v.5h.5a.5.5 0 0 1 .5.5v.5h.293l6.5-6.5zm-9.761 5.175-.106.106-1.528 3.821 3.821-1.528.106-.106A.5.5 0 0 1 5 12.5V12h-.5a.5.5 0 0 1-.5-.5V11h-.5a.5.5 0 0 1-.468-.325z"/></svg>
<svg class="abs" style="left:789.6px;top:718.1px" width="23.800" height="24.400" viewBox="180 120 800 820">
<defs><clipPath id="sc729"><ellipse cx="580" cy="530" rx="400" ry="410"/></clipPath>
<filter id="sb729" x="-10%" y="-10%" width="120%" height="120%"><feGaussianBlur stdDeviation="20"/></filter></defs>
<g clip-path="url(#sc729)"><g filter="url(#sb729)">
<rect x="100" y="60" width="960" height="960" fill="#eef0f5"/>
<path d="M150 460 L150 100 L700 100 C600 150 480 250 440 460Z" fill="#84696c"/>
<path d="M330 210 C480 110 720 110 890 290 L860 310 C720 190 520 180 360 250Z" fill="#6b6b6d"/>
<rect x="410" y="250" width="70" height="210" fill="#c9c1c0"/>
<ellipse cx="630" cy="330" rx="165" ry="130" fill="#bda894"/>
<ellipse cx="625" cy="470" rx="135" ry="185" fill="#eec6be"/>
<ellipse cx="620" cy="610" rx="105" ry="75" fill="#c48b76"/>
<ellipse cx="615" cy="585" rx="45" ry="22" fill="#e7a79b"/>
<path d="M180 700 C260 660 380 620 440 570 L520 760 L560 960 L180 960Z" fill="#1f2b57"/>
<path d="M700 640 C760 700 830 760 900 800 L880 960 L640 960Z" fill="#24345f"/>
<path d="M460 600 L540 780 L560 960 L680 960 L700 660 C670 680 560 680 520 640Z" fill="#ccd3e6"/>
<path d="M545 760 L600 740 L625 790 L575 815Z" fill="#3b3a52"/>
</g></g></svg>
<span class="t" style="left:825.60px;top:719.26px;font-family:'Liberation Sans',sans-serif;font-size:14.4px;line-height:20px;color:#343a40;letter-spacing:-0.109px;-webkit-text-stroke:0.5px #343a40;">updated</span>
<div class="abs" style="left:893.7px;top:730.7px;width:529.3px;height:1px;background:#d9dee3"></div>
<span class="t" style="left:1431.50px;top:719.26px;font-family:'Liberation Sans',sans-serif;font-size:14.4px;line-height:20px;color:#5d646b;letter-spacing:-0.293px;-webkit-text-stroke:0.15px #5d646b;">at 4:00pm</span>
<div class="abs" style="left:1514.7px;top:729.1px;width:3.3px;height:3.3px;border-radius:50%;background:#3fa4dc"></div>
<div class="abs" style="left:1520.95px;top:729.1px;width:3.3px;height:3.3px;border-radius:50%;background:#3fa4dc"></div>
<div class="abs" style="left:1527.2px;top:729.1px;width:3.3px;height:3.3px;border-radius:50%;background:#3fa4dc"></div>
<svg class="abs" style="left:763.5px;top:762.8px;" width="19.5" height="19.5" viewBox="0 0 16 16" fill="#6c757d"><path d="M12.146.146a.5.5 0 0 1 .708 0l3 3a.5.5 0 0 1 0 .708l-10 10a.5.5 0 0 1-.168.11l-5 2a.5.5 0 0 1-.65-.65l2-5a.5.5 0 0 1 .11-.168l10-10zM11.207 2.5 13.5 4.793 14.793 3.5 12.5 1.207 11.207 2.5zm1.586 3L10.5 3.207 4 9.707V10h.5a.5.5 0 0 1 .5.5v.5h.5a.5.5 0 0 1 .5.5v.5h.293l6.5-6.5zm-9.761 5.175-.106.106-1.528 3.821 3.821-1.528.106-.106A.5.5 0 0 1 5 12.5V12h-.5a.5.5 0 0 1-.5-.5V11h-.5a.5.5 0 0 1-.468-.325z"/></svg>
<svg class="abs" style="left:789.6px;top:761.2px" width="23.800" height="24.400" viewBox="180 120 800 820">
<defs><clipPath id="sc772"><ellipse cx="580" cy="530" rx="400" ry="410"/></clipPath>
<filter id="sb772" x="-10%" y="-10%" width="120%" height="120%"><feGaussianBlur stdDeviation="20"/></filter></defs>
<g clip-path="url(#sc772)"><g filter="url(#sb772)">
<rect x="100" y="60" width="960" height="960" fill="#eef0f5"/>
<path d="M150 460 L150 100 L700 100 C600 150 480 250 440 460Z" fill="#84696c"/>
<path d="M330 210 C480 110 720 110 890 290 L860 310 C720 190 520 180 360 250Z" fill="#6b6b6d"/>
<rect x="410" y="250" width="70" height="210" fill="#c9c1c0"/>
<ellipse cx="630" cy="330" rx="165" ry="130" fill="#bda894"/>
<ellipse cx="625" cy="470" rx="135" ry="185" fill="#eec6be"/>
<ellipse cx="620" cy="610" rx="105" ry="75" fill="#c48b76"/>
<ellipse cx="615" cy="585" rx="45" ry="22" fill="#e7a79b"/>
<path d="M180 700 C260 660 380 620 440 570 L520 760 L560 960 L180 960Z" fill="#1f2b57"/>
<path d="M700 640 C760 700 830 760 900 800 L880 960 L640 960Z" fill="#24345f"/>
<path d="M460 600 L540 780 L560 960 L680 960 L700 660 C670 680 560 680 520 640Z" fill="#ccd3e6"/>
<path d="M545 760 L600 740 L625 790 L575 815Z" fill="#3b3a52"/>
</g></g></svg>
<span class="t" style="left:825.60px;top:762.26px;font-family:'Liberation Sans',sans-serif;font-size:14.4px;line-height:20px;color:#343a40;letter-spacing:-0.109px;-webkit-text-stroke:0.5px #343a40;">updated</span>
<div class="abs" style="left:893.7px;top:773.8px;width:529.3px;height:1px;background:#d9dee3"></div>
<span class="t" style="left:1431.50px;top:762.26px;font-family:'Liberation Sans',sans-serif;font-size:14.4px;line-height:20px;color:#5d646b;letter-spacing:-0.293px;-webkit-text-stroke:0.15px #5d646b;">at 3:58pm</span>
<div class="abs" style="left:1514.7px;top:772.1999999999999px;width:3.3px;height:3.3px;border-radius:50%;background:#3fa4dc"></div>
<div class="abs" style="left:1520.95px;top:772.1999999999999px;width:3.3px;height:3.3px;border-radius:50%;background:#3fa4dc"></div>
<div class="abs" style="left:1527.2px;top:772.1999999999999px;width:3.3px;height:3.3px;border-radius:50%;background:#3fa4dc"></div>
<svg class="abs" style="left:763.5px;top:806.6px;" width="19.5" height="19.5" viewBox="0 0 16 16" fill="#6c757d"><path d="M12.146.146a.5.5 0 0 1 .708 0l3 3a.5.5 0 0 1 0 .708l-10 10a.5.5 0 0 1-.168.11l-5 2a.5.5 0 0 1-.65-.65l2-5a.5.5 0 0 1 .11-.168l10-10zM11.207 2.5 13.5 4.793 14.793 3.5 12.5 1.207 11.207 2.5zm1.586 3L10.5 3.207 4 9.707V10h.5a.5.5 0 0 1 .5.5v.5h.5a.5.5 0 0 1 .5.5v.5h.293l6.5-6.5zm-9.761 5.175-.106.106-1.528 3.821 3.821-1.528.106-.106A.5.5 0 0 1 5 12.5V12h-.5a.5.5 0 0 1-.5-.5V11h-.5a.5.5 0 0 1-.468-.325z"/></svg>
<svg class="abs" style="left:789.6px;top:805.0px" width="23.800" height="24.400" viewBox="180 120 800 820">
<defs><clipPath id="sc816"><ellipse cx="580" cy="530" rx="400" ry="410"/></clipPath>
<filter id="sb816" x="-10%" y="-10%" width="120%" height="120%"><feGaussianBlur stdDeviation="20"/></filter></defs>
<g clip-path="url(#sc816)"><g filter="url(#sb816)">
<rect x="100" y="60" width="960" height="960" fill="#eef0f5"/>
<path d="M150 460 L150 100 L700 100 C600 150 480 250 440 460Z" fill="#84696c"/>
<path d="M330 210 C480 110 720 110 890 290 L860 310 C720 190 520 180 360 250Z" fill="#6b6b6d"/>
<rect x="410" y="250" width="70" height="210" fill="#c9c1c0"/>
<ellipse cx="630" cy="330" rx="165" ry="130" fill="#bda894"/>
<ellipse cx="625" cy="470" rx="135" ry="185" fill="#eec6be"/>
<ellipse cx="620" cy="610" rx="105" ry="75" fill="#c48b76"/>
<ellipse cx="615" cy="585" rx="45" ry="22" fill="#e7a79b"/>
<path d="M180 700 C260 660 380 620 440 570 L520 760 L560 960 L180 960Z" fill="#1f2b57"/>
<path d="M700 640 C760 700 830 760 900 800 L880 960 L640 960Z" fill="#24345f"/>
<path d="M460 600 L540 780 L560 960 L680 960 L700 660 C670 680 560 680 520 640Z" fill="#ccd3e6"/>
<path d="M545 760 L600 740 L625 790 L575 815Z" fill="#3b3a52"/>
</g></g></svg>
<span class="t" style="left:825.60px;top:806.26px;font-family:'Liberation Sans',sans-serif;font-size:14.4px;line-height:20px;color:#343a40;letter-spacing:-0.109px;-webkit-text-stroke:0.5px #343a40;">updated</span>
<div class="abs" style="left:893.7px;top:817.6px;width:529.3px;height:1px;background:#d9dee3"></div>
<span class="t" style="left:1431.50px;top:806.26px;font-family:'Liberation Sans',sans-serif;font-size:14.4px;line-height:20px;color:#5d646b;letter-spacing:-0.293px;-webkit-text-stroke:0.15px #5d646b;">at 3:58pm</span>
<div class="abs" style="left:1514.7px;top:816.0px;width:3.3px;height:3.3px;border-radius:50%;background:#3fa4dc"></div>
<div class="abs" style="left:1520.95px;top:816.0px;width:3.3px;height:3.3px;border-radius:50%;background:#3fa4dc"></div>
<div class="abs" style="left:1527.2px;top:816.0px;width:3.3px;height:3.3px;border-radius:50%;background:#3fa4dc"></div>
<div class="abs" style="left:765.6px;top:881.0px;width:16.2px;height:16.2px;border-radius:50%;background:#7ac517"></div>
<svg class="abs" style="left:789.6px;top:877.9px" width="23.800" height="24.400" viewBox="180 120 800 820">
<defs><clipPath id="sc889"><ellipse cx="580" cy="530" rx="400" ry="410"/></clipPath>
<filter id="sb889" x="-10%" y="-10%" width="120%" height="120%"><feGaussianBlur stdDeviation="20"/></filter></defs>
<g clip-path="url(#sc889)"><g filter="url(#sb889)">
<rect x="100" y="60" width="960" height="960" fill="#eef0f5"/>
<path d="M150 460 L150 100 L700 100 C600 150 480 250 440 460Z" fill="#84696c"/>
<path d="M330 210 C480 110 720 110 890 290 L860 310 C720 190 520 180 360 250Z" fill="#6b6b6d"/>
<rect x="410" y="250" width="70" height="210" fill="#c9c1c0"/>
<ellipse cx="630" cy="330" rx="165" ry="130" fill="#bda894"/>
<ellipse cx="625" cy="470" rx="135" ry="185" fill="#eec6be"/>
<ellipse cx="620" cy="610" rx="105" ry="75" fill="#c48b76"/>
<ellipse cx="615" cy="585" rx="45" ry="22" fill="#e7a79b"/>
<path d="M180 700 C260 660 380 620 440 570 L520 760 L560 960 L180 960Z" fill="#1f2b57"/>
<path d="M700 640 C760 700 830 760 900 800 L880 960 L640 960Z" fill="#24345f"/>
<path d="M460 600 L540 780 L560 960 L680 960 L700 660 C670 680 560 680 520 640Z" fill="#ccd3e6"/>
<path d="M545 760 L600 740 L625 790 L575 815Z" fill="#3b3a52"/>
</g></g></svg>
<span class="t" style="left:825.60px;top:879.26px;font-family:'Liberation Sans',sans-serif;font-size:14.4px;line-height:20px;color:#343a40;letter-spacing:-0.055px;-webkit-text-stroke:0.5px #343a40;">fully enabled</span>
<div class="abs" style="left:922.5000000000001px;top:890.5px;width:500.4999999999999px;height:1px;background:#d9dee3"></div>
<span class="t" style="left:1431.50px;top:879.26px;font-family:'Liberation Sans',sans-serif;font-size:14.4px;line-height:20px;color:#5d646b;letter-spacing:-0.293px;-webkit-text-stroke:0.15px #5d646b;">at 3:57pm</span>
<div class="abs" style="left:1514.7px;top:888.9px;width:3.3px;height:3.3px;border-radius:50%;background:#3fa4dc"></div>
<div class="abs" style="left:1520.95px;top:888.9px;width:3.3px;height:3.3px;border-radius:50%;background:#3fa4dc"></div>
<div class="abs" style="left:1527.2px;top:888.9px;width:3.3px;height:3.3px;border-radius:50%;background:#3fa4dc"></div>
<div class="abs" style="left:826px;top:833.3px;width:669px;height:29.6px;background:#fff;border:1px solid #dbe6f2;border-radius:3px"></div>
<span class="t" style="left:834.80px;top:841.23px;font-family:'Liberation Sans',sans-serif;font-size:11.6px;line-height:16px;color:#343a40;font-weight:bold;letter-spacing:-0.629px;">tags:</span>
<span class="t" style="left:862.90px;top:841.16px;font-family:'Liberation Sans',sans-serif;font-size:11.8px;line-height:16px;color:#84cc3b;font-style:italic;letter-spacing:-0.002px;">circuit</span>
</div></div>
<div id="frame"></div>
</body>
</html>
